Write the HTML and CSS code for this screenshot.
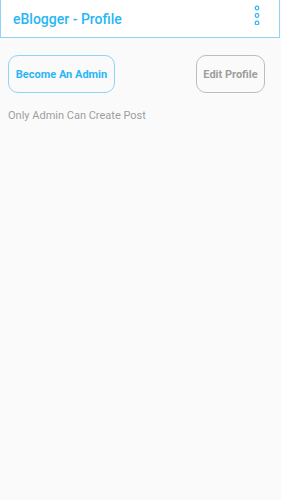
FILE: index.html
```html
<!DOCTYPE html>
<html lang="en">
  <head>
    <meta charset="UTF-8" />
    <meta name="viewport" content="width=device-width, initial-scale=1.0" />
    <title>eBlogger - Profile</title>
    <link rel="stylesheet" href="styles.css">
  </head>
  <body>
    <div class="header">
      <div class="title">eBlogger - Profile</div>
      <svg class="menu" width="6" height="20" viewBox="0 0 6 20">
        <circle cx="3" cy="3" r="1.8" fill="none" stroke="#29b6f6" stroke-width="1.2" />
        <circle cx="3" cy="10.5" r="1.8" fill="none" stroke="#29b6f6" stroke-width="1.2" />
        <circle cx="3" cy="18" r="1.8" fill="none" stroke="#29b6f6" stroke-width="1.2" />
      </svg>
    </div>
    <div class="content">
      <div class="btn-row">
        <div class="btn admin-btn">Become An Admin</div>
        <div class="btn edit-btn">Edit Profile</div>
      </div>
      <div class="note">Only Admin Can Create Post</div>
    </div>
  </body>
</html>
```

FILE: styles.css
```css
* {
  margin: 0;
  padding: 0;
  box-sizing: border-box;
}
body {
  font-family: Roboto, "Liberation Sans", sans-serif;
  background-color: #fafafa;
  min-height: 100vh;
}
.header {
  height: 38px;
  width: 280px;
  background-color: #fff;
  border: 1px solid #8fd3f5;
  border-top: none;
  display: flex;
  align-items: center;
  justify-content: space-between;
  padding: 0 19px 0 12px;
}
.title {
  font-size: 14px;
  font-weight: 500;
  color: #29b6f6;
  margin-top: 1px;
}
.menu {
  margin-top: -7px;
}
.content {
  padding: 17px 16px 0 8px;
}
.btn-row {
  display: flex;
  justify-content: space-between;
}
.btn {
  height: 38px;
  border-radius: 10px;
  border: 1px solid;
  display: flex;
  align-items: center;
  justify-content: center;
  font-size: 11px;
  font-weight: bold;
}
.admin-btn {
  width: 107px;
  color: #29b6f6;
  border-color: #8fd3f5;
}
.edit-btn {
  width: 69px;
  color: #9e9e9e;
  border-color: #bdbdbd;
}
.note {
  margin-top: 16px;
  font-size: 11px;
  color: #9e9e9e;
}
```
